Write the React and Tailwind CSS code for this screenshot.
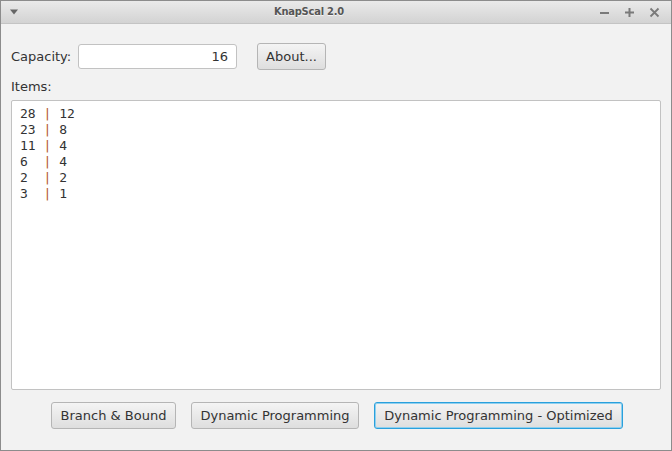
import React from 'react';

const items = [
  ['28', '12'],
  ['23', '8'],
  ['11', '4'],
  ['6', '4'],
  ['2', '2'],
  ['3', '1'],
];

// Plain JavaFX-looking push button
const Btn = ({ children, focused, className = '' }) => (
  <button
    className={`h-[27px] rounded-[3px] border bg-gradient-to-b from-[#f4f4f4] to-[#dedede] text-[13px] text-[#333] leading-none ${
      focused ? 'border-[#2aa0dc] shadow-[inset_0_0_0_1px_#8fd0ef]' : 'border-[#b5b5b5]'
    } ${className}`}
  >
    {children}
  </button>
);

const App = () => {
  return (
    <div className="w-[672px] h-[451px] flex flex-col border border-[#8c8c8c] bg-[#f2f2f2] font-['DejaVu_Sans',sans-serif] text-[#333] overflow-hidden">
      {/* Title bar */}
      <div className="h-[23px] shrink-0 flex items-center px-[7px] bg-gradient-to-b from-[#eaeaea] to-[#d3d3d3] border-b border-[#c4c4c4]">
        <svg width="10" height="6" viewBox="0 0 10 6" className="ml-[1px]">
          <path d="M1 0.5 L9 0.5 L5 5.5 Z" fill="#666" />
        </svg>
        <div className="flex-1 text-center font-['DejaVu_Sans_Condensed',sans-serif] font-bold text-[11px] text-[#555] tracking-[-0.2px] [text-shadow:0_1px_0_#f4f4f4]">
          KnapScal 2.0
        </div>
        <div className="flex items-center gap-[14px] pr-[4px] text-[#777]">
          <svg width="11" height="11" viewBox="0 0 11 11">
            <path d="M1 6 H10" stroke="#7a7a7a" strokeWidth="2" />
          </svg>
          <svg width="11" height="11" viewBox="0 0 11 11">
            <path d="M1 5.5 H10 M5.5 1 V10" stroke="#7a7a7a" strokeWidth="2" />
          </svg>
          <svg width="11" height="11" viewBox="0 0 11 11">
            <path d="M1.5 1.5 L9.5 9.5 M9.5 1.5 L1.5 9.5" stroke="#7a7a7a" strokeWidth="1.8" />
          </svg>
        </div>
      </div>

      {/* Content */}
      <div className="flex-1 flex flex-col px-[10px] pt-[20px] pb-[21px]">
        <div className="flex items-center h-[25px]">
          <span className="text-[13px] w-[67px]">Capacity:</span>
          <div className="w-[159px] h-[25px] rounded-[3px] border border-[#c2c2c2] bg-white flex items-center justify-end pr-[8px] text-[13px]">
            16
          </div>
          <Btn className="ml-[20px] w-[69px] h-[26px]">About...</Btn>
        </div>

        <div className="text-[13px] mt-[10px] leading-[16px]">Items:</div>

        <div className="mt-[5px] h-[290px] border border-[#c2c2c2] bg-white rounded-[2px] pl-[8px] pt-[5px] font-['DejaVu_Sans_Mono',monospace] text-[13px] leading-[16px] text-[#333]">
          {items.map(([w, v], i) => (
            <div key={i} className="whitespace-pre">
              {w.padEnd(3, ' ')}
              <span className="text-[#b5571f]">|</span> {v}
            </div>
          ))}
        </div>

        <div className="flex gap-[15px] mt-[12px] ml-[40px]">
          <Btn className="w-[125px]">Branch &amp; Bound</Btn>
          <Btn className="w-[168px]">Dynamic Programming</Btn>
          <Btn className="w-[249px]" focused>
            Dynamic Programming - Optimized
          </Btn>
        </div>
      </div>
    </div>
  );
};

export default App;
